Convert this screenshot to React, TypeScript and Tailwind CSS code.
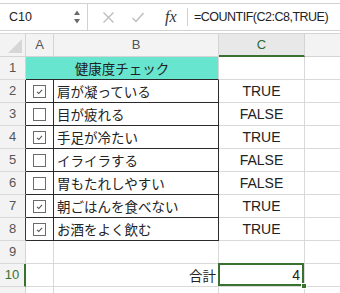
import React from "react";

const items = [
  { label: "肩が凝っている", checked: true, value: "TRUE" },
  { label: "目が疲れる", checked: false, value: "FALSE" },
  { label: "手足が冷たい", checked: true, value: "TRUE" },
  { label: "イライラする", checked: false, value: "FALSE" },
  { label: "胃もたれしやすい", checked: false, value: "FALSE" },
  { label: "朝ごはんを食べない", checked: true, value: "TRUE" },
  { label: "お酒をよく飲む", checked: true, value: "TRUE" },
];

const SANS = "font-['Liberation_Sans','Noto_Sans_CJK_JP',sans-serif]";
const JP = "font-['Noto_Sans_CJK_JP','Noto_Sans_CJK_SC',sans-serif]";

function RowHeader({ n, tone }: { n: number; tone: "gray" | "dark" | "active" }) {
  const border =
    tone === "active"
      ? "border-r-2 border-r-[#3b7130] text-[#3b7130]"
      : tone === "dark"
        ? "border-r border-r-[#3a3a3a] text-[#555]"
        : "border-r border-r-[#d4d4d4] text-[#555]";
  return (
    <div
      className={`flex h-full w-[26px] shrink-0 items-center justify-center border-b border-b-[#d9d9d9] bg-[#f3f3f3] text-[13px] ${border}`}
    >
      {n}
    </div>
  );
}

function CheckBox({ checked }: { checked: boolean }) {
  return (
    <div className="flex h-[13px] w-[13px] items-center justify-center border border-[#6b6b6b] bg-white">
      {checked && (
        <svg width="9" height="9" viewBox="0 0 9 9">
          <path d="M2 4.8 L3.8 6.5 L7 2.8" fill="none" stroke="#555" strokeWidth="1.1" />
        </svg>
      )}
    </div>
  );
}

function FormulaBar() {
  return (
    <div className="h-[33px] bg-white pt-[3px]">
      <div className="flex h-[28px] items-center border-y border-[#d2d2d2]">
        <div className="flex h-full w-[88px] shrink-0 items-center justify-between border-r border-[#d2d2d2] pl-[9px] pr-[6px]">
          <span className="text-[12.5px] text-[#222]">C10</span>
          <svg width="8" height="16" viewBox="0 0 8 16">
            <path d="M4 1.5 L7 6 L1 6 Z" fill="#6a6a6a" />
            <path d="M4 14.5 L7 10 L1 10 Z" fill="#6a6a6a" />
          </svg>
        </div>
        <div className="flex w-[99px] shrink-0 items-center pl-[14px]">
          <svg width="13" height="13" viewBox="0 0 13 13">
            <path d="M1.5 1.5 L11.5 11.5 M11.5 1.5 L1.5 11.5" stroke="#bdbdbd" strokeWidth="1.4" />
          </svg>
          <svg className="ml-[16px]" width="14" height="13" viewBox="0 0 14 13">
            <path d="M1.5 7 L5 10.5 L12.5 2" fill="none" stroke="#bdbdbd" strokeWidth="1.4" />
          </svg>
          <span className="ml-[20px] font-['Liberation_Serif',serif] text-[16px] italic leading-none text-[#333]">
            fx
          </span>
        </div>
        <div className="h-[18px] w-px bg-[#d2d2d2]" />
        <span className="ml-[6px] text-[12.5px] tracking-[-0.5px] text-[#222]">=COUNTIF(C2:C8,TRUE)</span>
      </div>
    </div>
  );
}

function ColumnHeaders() {
  return (
    <div className="flex h-[24px] bg-[#f3f3f3] text-[13px] text-[#555]">
      <div className="relative h-full w-[26px] shrink-0 border-r border-b border-[#d4d4d4] border-t border-t-[#d9d9d9]">
        <svg className="absolute bottom-[3px] right-[3px]" width="14" height="14" viewBox="0 0 14 14">
          <path d="M14 0 L14 14 L0 14 Z" fill="#d6d6d6" />
        </svg>
      </div>
      <div className="flex w-[28px] shrink-0 items-center justify-center border-r border-b border-t border-[#d4d4d4]">A</div>
      <div className="flex w-[165px] shrink-0 items-center justify-center border-r border-b border-t border-[#d4d4d4]">B</div>
      <div className="flex w-[86px] shrink-0 items-center justify-center border-r border-t border-[#d4d4d4] border-b-2 border-b-[#3b7130] bg-[#e8e8e8] text-[#2f6b34]">
        C
      </div>
      <div className="flex-1 border-b border-t border-[#d4d4d4]" />
    </div>
  );
}

export default function App() {
  return (
    <div className={`h-[293px] w-[340px] overflow-hidden bg-white ${SANS}`}>
      <FormulaBar />
      <ColumnHeaders />

      {/* row 1: merged title */}
      <div className="flex h-[23px]">
        <RowHeader n={1} tone="gray" />
        <div
          className={`flex w-[193px] shrink-0 items-center justify-center border-r border-r-[#d9d9d9] border-b border-b-[#2a2a2a] bg-[#67e5cf] text-[13.5px] text-[#222] ${JP}`}
        >
          健康度チェック
        </div>
        <div className="w-[86px] shrink-0 border-r border-b border-[#d9d9d9]" />
        <div className="flex-1 border-b border-[#d9d9d9]" />
      </div>

      {items.map((item, i) => (
        <div key={item.label} className="flex h-[23px]">
          <RowHeader n={i + 2} tone="dark" />
          <div className="flex w-[28px] shrink-0 items-center justify-center border-r border-b border-[#2a2a2a]">
            <CheckBox checked={item.checked} />
          </div>
          <div
            className={`flex w-[165px] shrink-0 items-center border-r border-b border-[#2a2a2a] pl-[3px] text-[13.5px] text-[#222] ${JP}`}
          >
            {item.label}
          </div>
          <div className="flex w-[86px] shrink-0 items-center justify-center border-r border-b border-[#d9d9d9] text-[14px] text-[#222]">
            {item.value}
          </div>
          <div className="flex-1 border-b border-[#d9d9d9]" />
        </div>
      ))}

      {/* row 9 */}
      <div className="flex h-[23px]">
        <RowHeader n={9} tone="gray" />
        <div className="w-[28px] shrink-0 border-r border-b border-[#d9d9d9]" />
        <div className="w-[165px] shrink-0 border-r border-b border-[#d9d9d9]" />
        <div className="w-[86px] shrink-0 border-r border-b border-[#d9d9d9]" />
        <div className="flex-1 border-b border-[#d9d9d9]" />
      </div>

      {/* row 10: total */}
      <div className="flex h-[23px]">
        <RowHeader n={10} tone="active" />
        <div className="w-[28px] shrink-0 border-r border-b border-[#d9d9d9]" />
        <div
          className={`flex w-[165px] shrink-0 items-center justify-end border-r border-b border-[#d9d9d9] pr-[2px] text-[13.5px] text-[#222] ${JP}`}
        >
          合計
        </div>
        <div className="relative flex w-[86px] shrink-0 items-center justify-end border-r border-b border-[#d9d9d9] pr-[4px] text-[14px] text-[#222]">
          4
          <div className="absolute -left-px -top-px bottom-0 right-0 border-2 border-[#3b7130]" />
          <div className="absolute -bottom-[3px] -right-[3px] h-[6px] w-[6px] border border-white bg-[#3b7130]" />
        </div>
        <div className="flex-1 border-b border-[#d9d9d9]" />
      </div>

      {/* row 11 */}
      <div className="flex h-[23px]">
        <RowHeader n={11} tone="gray" />
        <div className="w-[28px] shrink-0 border-r border-b border-[#d9d9d9]" />
        <div className="w-[165px] shrink-0 border-r border-b border-[#d9d9d9]" />
        <div className="w-[86px] shrink-0 border-r border-b border-[#d9d9d9]" />
        <div className="flex-1 border-b border-[#d9d9d9]" />
      </div>
    </div>
  );
}
